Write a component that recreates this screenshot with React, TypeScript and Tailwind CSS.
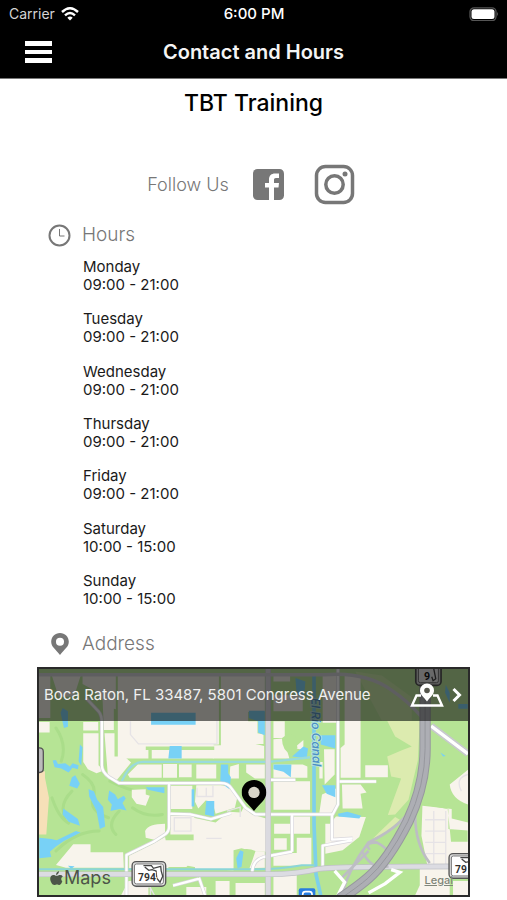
import React from "react";

const hours = [
  { day: "Monday", time: "09:00 - 21:00" },
  { day: "Tuesday", time: "09:00 - 21:00" },
  { day: "Wednesday", time: "09:00 - 21:00" },
  { day: "Thursday", time: "09:00 - 21:00" },
  { day: "Friday", time: "09:00 - 21:00" },
  { day: "Saturday", time: "10:00 - 15:00" },
  { day: "Sunday", time: "10:00 - 15:00" },
];

function StatusBar() {
  return (
    <div className="grid h-7 grid-cols-3 items-center pr-2 pl-[9px] text-[14px] leading-5">
      <div className="flex items-center gap-1.5">
        <span className="text-[#d4d4d4]">Carrier</span>
        <svg width="18" height="14" viewBox="0 0 18 14" fill="none" stroke="#fff" strokeWidth="2.4" aria-label="Wi-Fi">
          <path d="M1 5Q9-2.5 17 5" />
          <path d="M4 8.3Q9 3.6 14 8.3" />
          <path d="M6.3 10.8Q9 8.2 11.7 10.8L9 13.6Z" fill="#fff" stroke="none" />
        </svg>
      </div>
      <span className="text-center text-[15px] font-medium whitespace-nowrap">6:00 PM</span>
      <svg className="justify-self-end" width="30" height="14" viewBox="0 0 30 14" aria-label="Battery">
        <rect x="1" y=".8" width="26" height="12.8" rx="4" fill="none" stroke="#555" strokeWidth="1.3" />
        <rect x="2.5" y="2.3" width="23" height="9.8" rx="2.5" fill="#fff" />
        <path d="M28 5q2 2 0 4z" fill="#555" />
      </svg>
    </div>
  );
}

function PinIcon({ className, hole }: { className: string; hole: string }) {
  return (
    <svg className={className} viewBox="0 0 24 30" aria-hidden="true">
      <path d="M12 0C5.2 0 0 5.2 0 12c0 7 6 10 12 18 6-8 12-11 12-18C24 5.200 18.800 0 12 0Z" fill="currentColor" />
      <circle cx="12" cy="12" r="5.500" fill={hole} />
    </svg>
  );
}

function RouteShield({ x, y, label }: { x: number; y: number; label: string }) {
  return (
    <g transform={`translate(${x} ${y})`}>
      <rect x="2" y="2" width="101" height="74" rx="12" fill="#ddd" stroke="#555" strokeWidth="4" />
      <rect x="9" y="9" width="87" height="60" rx="6" fill="#fff" stroke="#777" strokeWidth="3" />
      <path d="M36 14h24l6 8 22-6q0 14 6 30l-8 18-10-12-2-22-12-4-10 2-12-10" fill="none" stroke="#444" strokeWidth="4" />
      <text x="20" y="59" fontSize="31" fontWeight="700" fill="#333" stroke="#fff" strokeWidth="6" paintOrder="stroke" fontFamily="Roboto, sans-serif">
        {label}
      </text>
    </g>
  );
}

const localStreets =
  "M150 100l38 40q10 12 10 34v128q0 20 22 36l30 18h306q22 0 32 16l42 58 30 20h232l16-30V12M400 358v130q0 14-12 22l-34 22-82 40v121M700 346h80M913 351h110M890 450v76l62-4M862 606v-62l88-16M404 448l60 2 62 14 60-18M770 452v110M650 622q2-34 34-44l86-16M490 640l18 53M412 664l76-20";

/* Map artwork, drawn on a 1290 by 681 canvas. */
function MapDrawing() {
  return (
    <svg className="absolute inset-0 h-full w-full" viewBox="9 12 1290 681" preserveAspectRatio="xMidYMid slice" role="img" aria-label="Map of Boca Raton">
      <rect x="0" y="0" width="1310" height="700" fill="#b6e495" />
      {/* fairways */}
      <g fill="none" stroke="#aadd8a" strokeWidth="9" strokeLinecap="round">
        <path d="M60 190q34 50 16 100M140 330q46 30 32 70t46 60M108 380q-40 40-20 80M222 350q60 30 90 30M250 440q-40 40-10 70M48 400q20 60 50 76M60 560q60-60 130-60M290 430q40 30 90 20" />
      </g>
      <path d="M9 320h18v20l12 60-8 110H9z" fill="#f6e0b8" />
      {/* parkland */}
      <g fill="#dcebaf">
        <path d="M1056 168h98l-6 120-28 118-40 44-22 2 40-110-30-6-12-60 46-20 28-10-50-30z" />
        <path d="M1030 506l50-48 14 8-40 40-40 16z" />
        <path d="M960 20l80 12 90 66v70h-90z" opacity=".5" />
      </g>
      {/* city blocks */}
      <g fill="#f8f4ec">
        <path d="M9 30h34v130H9zM9 172h32v32H9zM48 34h86l-20 62H68zM140 34h100v100l-22-6-40-50-38-20z" />
        <path d="M142 172h45v26h-45zM142 206h46v96l16 16-22 8-26-12-14-22z" />
        <path d="M200 100h34v96h-30zM206 206h30v70h30l20 18-46 56-24-18z" />
        <path d="M246 34h304v206h-16v42H246z" />
        <path d="M556 34h132v108h-50v28h28v36l18 4v28h-24l26 6v38H532v-40h24z" />
        <path d="M282 340l-6-10 30-30h72v40zM382 298h42v42h-42zM430 300h38v38h-38zM482 300h60v42h-60zM584 306l26-8v44h-28zM632 300h56v42h-30l-26-18z" />
        <path d="M288 376l42-2v16l12 4-12 30-28-6-14-20zM328 500q10-22 60-22v36l-26 14-32-8z" />
        <path d="M404 364h66v70h-66zM404 454h72v56h-72zM482 362h74l28 4 22 30-8 34-58 18-10-36-20-4-22 24-10-20z" />
        <path d="M390 528h84v-68l66 14 40-32 36 2 8-14 26 20 42 12v100h-34l-40-10-24 6v60l-116-4v-6h-80v4H280v-38l70-34 38-22z" />
        <path d="M60 602l52-62h52v24h98l2 46H90zM644 560l44 2v48l-48 2zM278 650l60-2v45h-82zM540 650h42v43h-42zM600 656h88v37h-88zM452 668h60v25h-60z" />
        <path d="M714 34h50v16h-50zM714 90h88v50h-88zM714 170h34v50h-34zM714 224l30-2 18 60h-48zM776 250l28-24v30z" />
        <path d="M714 300h88l14 6v34H714zM714 350h110v86H714zM716 478h48v-22h60v52H716zM716 522h38v34h-38zM784 520h44v84H714v-38h70zM714 626h70v67h-70z" />
        <path d="M862 34h44v140h-44zM866 254h32v76l-30 30zM852 292h10v50h-10zM860 390l42-18v58l-14 16h-36zM928 34h48v306h-60V250l12-10zM990 302h68v36h-68zM920 360h56l18 24-18 4 6 44h-60z" />
        <path d="M902 456l90 2-20 60-50 40-52 10v-90h14zM900 470l70 2v40h-60z" />
        <path d="M1162 424l88 10v28l49 12v130h-122l-18-90zM1244 360l55-44v104q-50-16-55-60zM1154 612h90v81h-104l14-30zM1254 650h45v43h-45z" />
      </g>
      {/* lawns over blocks */}
      <g fill="#b6e495">
        <path d="M740 220q30-20 42 0l4 30-18 20q-30-14-28-50zM604 560q30-12 56 0l-8 24-10 28h-40zM1162 420q40-10 78 14v60l58 4v34h-50l-10-98zM330 246h206v10H330zM338 256h10v30h-10zM456 604l20 4-8 4h-20z" />
      </g>
      {/* neighbourhood streets */}
      <g fill="none" stroke="#e6e3e6" strokeWidth="4">
        <path d="M284 170v40l24 28h236v-70M416 460h50v40h-50zM484 370v26h48v-34M512 370v24M574 440l40-12v30M512 522h46M1170 466h60M1170 500h60M1170 534h60M1170 568h60M1232 440v160M1196 440v160M1299 330q-40 10-20 50M300 668h44v25M336 656l20 37M640 390h28" />
      </g>
      {/* water */}
      <g fill="#78d1f6">
        <path d="M346 144h134v36H346zM640 138h48v74l-20-8v-34l-28-10zM780 40l30 10-4 46-22-6zM856 212h44v40l-44-12zM770 276l34-30 14 6-4 28zM402 244h36v38h-40zM556 300h22v26l8 12-4 36-28-20zM714 300h54l-2 38-22-16-30-8zM860 362h40v36l-26-10zM908 448l28-6 42 12-6 8-62-6zM512 410h24v46l-28-6zM468 374h8v52h-8zM614 558l10 4-6 46-12 4-4-30zM330 368h56v18l-50-10z" />
        <path d="M80 130l16 10v46l-12 4-10-46zM132 240l8 8-4 56-8-14zM50 288l10-2 6 12 22-2 14 10 8-10 18 6-2 12-16-4-12 14-22-12-20-4zM118 332l14 26-8 14-24-8 8-26zM158 374l16 6 10 26 18 22 6 58-16 8-10-54-22-44zM220 378l18 12 8 14 18-10 6 8-10 14 12 22-20-4-28 6 4-20-12-14zM82 432l44 32 6 20-34-12-18-22zM120 500l14 4-50 26-26 18-16 14 4 16-36 4V520l36 4 16 4zM1216 264l16 10-8 2zM1232 60l12 24v30l-14-30zM1270 118h28v14h-28zM96 604l20 2-10 8z" />
      </g>
      <g fill="none" stroke="#78d1f6">
        <path d="M258 350q26-58 64-58h376l60-6 66-8" stroke="#9adbdc" strokeWidth="7" />
        <path d="M836 30v450l4 100 2 50 14 63" stroke="#7dd0ea" strokeWidth="11" />
        <path d="M9 615h660q60 0 130-12h40" stroke="#8bd5d8" strokeWidth="6" />
      </g>
      {/* streets */}
      <path d={localStreets} fill="none" stroke="#d9d7dc" strokeWidth="11" strokeLinejoin="round" />
      <path d={localStreets} fill="none" stroke="#fff" strokeWidth="7" strokeLinejoin="round" />
      <g fill="none">
        <path d="M698 12v681" stroke="#c9c8ce" strokeWidth="17" />
        <path d="M698 12v681" stroke="#dbdae0" strokeWidth="13" />
        <path d="M9 630h690q84 0 150-16 40-8 450-8" stroke="#bfc0c6" strokeWidth="17" />
        <path d="M9 630h690q84 0 150-16 40-8 450-8" stroke="#dcdce2" strokeWidth="13" />
        <path d="M9 30h860q120-10 200 46 50 34 90 80" stroke="#d2d2d6" strokeWidth="10" />
      </g>
      {/* highway and ramps */}
      <g fill="none" stroke="#bdbdc4" strokeWidth="8">
        <path d="M1124 440q-40 54-124 94-60 80-78 150M1140 450q0 90 44 146M1004 556q-20-20 20-22 60 30 24 70M980 560q30 60 80 46M920 640l80-80" />
      </g>
      <path d="M1188 184l111 84" stroke="#c8c8ce" strokeWidth="20" fill="none" />
      <path d="M1188 184l111 84M898 620l30 34-20 39M1068 616l26 8-44 34-50 28" stroke="#fff" strokeWidth="10" fill="none" />
      <path d="M1170 12v240q0 110-52 220-60 118-120 170-30 26-84 62" stroke="#97989e" strokeWidth="34" fill="none" />
      <path d="M1170 12v240q0 110-52 220-60 118-120 170-30 26-84 62" stroke="#adaeb4" strokeWidth="28" fill="none" />
      <path d="M1170 12v240q0 110-52 220-60 118-120 170-30 26-84 62" stroke="#97989e" strokeWidth="3" fill="none" />
      <text transform="translate(828 100) rotate(89)" fontSize="36" fontStyle="italic" fontWeight="500" fill="#4a8fc4" stroke="#b8e4dc" strokeWidth="5" paintOrder="stroke" fontFamily="Inter, sans-serif">
        El Rio Canal
      </text>
      <RouteShield x={287} y={590} label="794" />
      <RouteShield x={1240} y={566} label="79" />
      <g>
        <rect x="1142" y="-20" width="76" height="82" rx="12" fill="#d0d0d0" stroke="#444" strokeWidth="5" />
        <rect x="1150" y="-20" width="60" height="74" rx="6" fill="#eee" stroke="#666" strokeWidth="3" />
        <path d="M1196 12l6 30-8 6-4-12" fill="none" stroke="#333" strokeWidth="4" />
        <text x="1167" y="47" fontSize="32" fontWeight="700" fontFamily="Roboto, sans-serif">9</text>
      </g>
      <path d="M0 250h10q12 0 12 12v50q0 12-12 12H0z" fill="#bbb" stroke="#555" strokeWidth="4" />
      <rect x="790" y="672" width="50" height="40" rx="6" fill="#287de0" />
      <path d="M802 700v-10q0-8 8-8h12q8 0 8 8v10" fill="none" stroke="#fff" strokeWidth="5" />
    </svg>
  );
}

function AddressMap() {
  return (
    <div className="relative mx-[37px] mt-[11px] h-[230px] overflow-hidden border-2 border-[#2a2a2a] bg-[#b6e495]">
      <MapDrawing />
      <a href="#directions" className="relative flex h-[52px] items-center bg-[#111]/60 pr-[6px] pl-[5px] text-white">
        <span className="flex-1 text-[15px] leading-5 whitespace-nowrap text-[#f0f0f0]">Boca Raton, FL 33487, 5801 Congress Avenue</span>
        <svg width="34" height="26" viewBox="0 0 34 26" fill="none" aria-hidden="true">
          <path d="M11 13.500H6.500L2 23.500h30l-4.500-10H23" stroke="#fff" strokeWidth="2.400" />
          <path d="M17 1.500a7 7 0 0 0-7 7c0 4.500 4 6.500 7 11 3-4.500 7-6.500 7-11a7 7 0 0 0-7-7Z" fill="#fff" />
          <circle cx="17" cy="8.500" r="2.800" fill="#55564d" />
        </svg>
        <svg className="ml-2" width="10" height="16" viewBox="0 0 10 16" fill="none" stroke="#fff" strokeWidth="3" aria-hidden="true">
          <path d="M1.500 2l6 6-6 6" />
        </svg>
      </a>
      <PinIcon className="absolute top-[111px] left-1/2 h-[31px] w-[25px] -translate-x-1/2 text-black" hole="#d8d5c9" />
      <div className="absolute bottom-[5px] left-[11px] flex items-center gap-px text-[#4c5548]">
        <svg width="13" height="16" viewBox="0 0 13 16" fill="currentColor" aria-hidden="true">
          <path d="M9 1q0 3-3 4Q6 2 9 1ZM6.500 5.800C8 5.800 8.500 5 10 5q2 0 2.800 1.400-3 2-.5 5.100Q11 15 9.500 15c-1 0-1.400-.6-2.500-.6s-1.700.6-2.600.6C2 15 .2 11 .2 8.700.2 6.500 1.600 5 3.500 5c1.300 0 2 .8 3 .8Z" />
        </svg>
        <span className="text-[18px] leading-6">Maps</span>
      </div>
      <a href="#legal" className="absolute right-[15px] bottom-[7px] text-[11px] leading-4 font-medium text-[#7f8579] underline">Legal</a>
    </div>
  );
}

export default function App() {
  return (
    <div className="min-h-screen bg-white font-[Inter,'Liberation_Sans',sans-serif] text-black">
      <header className="h-[79px] border-b border-[#777] bg-black text-white">
        <StatusBar />
        <div className="grid h-12 grid-cols-[1fr_auto_1fr] items-center">
          <button type="button" aria-label="Open menu" className="ml-[25px] flex w-[27px] flex-col gap-1">
            <span className="h-[5px] w-full bg-white" />
            <span className="h-[4px] w-full bg-white" />
            <span className="h-[5px] w-full bg-white" />
          </button>
          <h1 className="text-[20px] leading-6 font-semibold text-[#f4f4f4]">Contact and Hours</h1>
        </div>
      </header>

      <main>
        <h2 className="pt-2 text-center text-[23px] leading-8 font-medium">TBT Training</h2>

        <div className="mt-[45px] flex items-center justify-center pr-[5px] text-[#777]">
          <span className="text-[18px] leading-6 font-light">Follow Us</span>
          <a href="#facebook" aria-label="Facebook" className="ml-6">
            <svg width="31" height="31" viewBox="0 0 31 31">
              <rect width="31" height="31" rx="4.500" fill="#777" />
              <path d="M16 31V18.500h-4V14h4v-3.500C16 6.500 18.500 4.500 22 4.500h4V9h-3c-1.500 0-2 .8-2 2v3h5l-.5 4.500H21V31Z" fill="#fff" />
            </svg>
          </a>
          <a href="#instagram" aria-label="Instagram" className="ml-[30px]">
            <svg width="41" height="41" viewBox="0 0 41 41" fill="none" stroke="#777">
              <rect x="2.500" y="2.500" width="36" height="36" rx="9" strokeWidth="3.500" />
              <circle cx="20.500" cy="20.500" r="8.700" strokeWidth="3.500" />
              <circle cx="31" cy="10" r="2.500" fill="#777" stroke="none" />
            </svg>
          </a>
        </div>

        <section className="mt-[18px] px-[48px]">
          <h3 className="flex items-center gap-[11px] text-[19px] leading-6 font-light text-[#777]">
            <svg width="23" height="23" viewBox="0 0 23 23" fill="none" stroke="#777" aria-hidden="true">
              <circle cx="11.500" cy="11.500" r="10" strokeWidth="2" />
              <path d="M11.500 5v7h5" strokeWidth="1" />
            </svg>
            Hours
          </h3>
          <ul className="mt-[11px] flex h-[350px] flex-col justify-between pl-[35px] text-[15px] text-[#1a1a1a]">
            {hours.map(({ day, time }) => (
              <li key={day} className="leading-[18px]">
                <span className="block">{day}</span>
                <time className="block">{time}</time>
              </li>
            ))}
          </ul>
        </section>

        <section className="mt-6">
          <h3 className="mx-[48px] flex items-center gap-[11px] text-[19px] leading-6 font-light text-[#777]">
            <span className="flex w-[23px] justify-center">
              <PinIcon className="h-[22px] w-[18px]" hole="#fff" />
            </span>
            Address
          </h3>
          <AddressMap />
        </section>
      </main>
    </div>
  );
}
